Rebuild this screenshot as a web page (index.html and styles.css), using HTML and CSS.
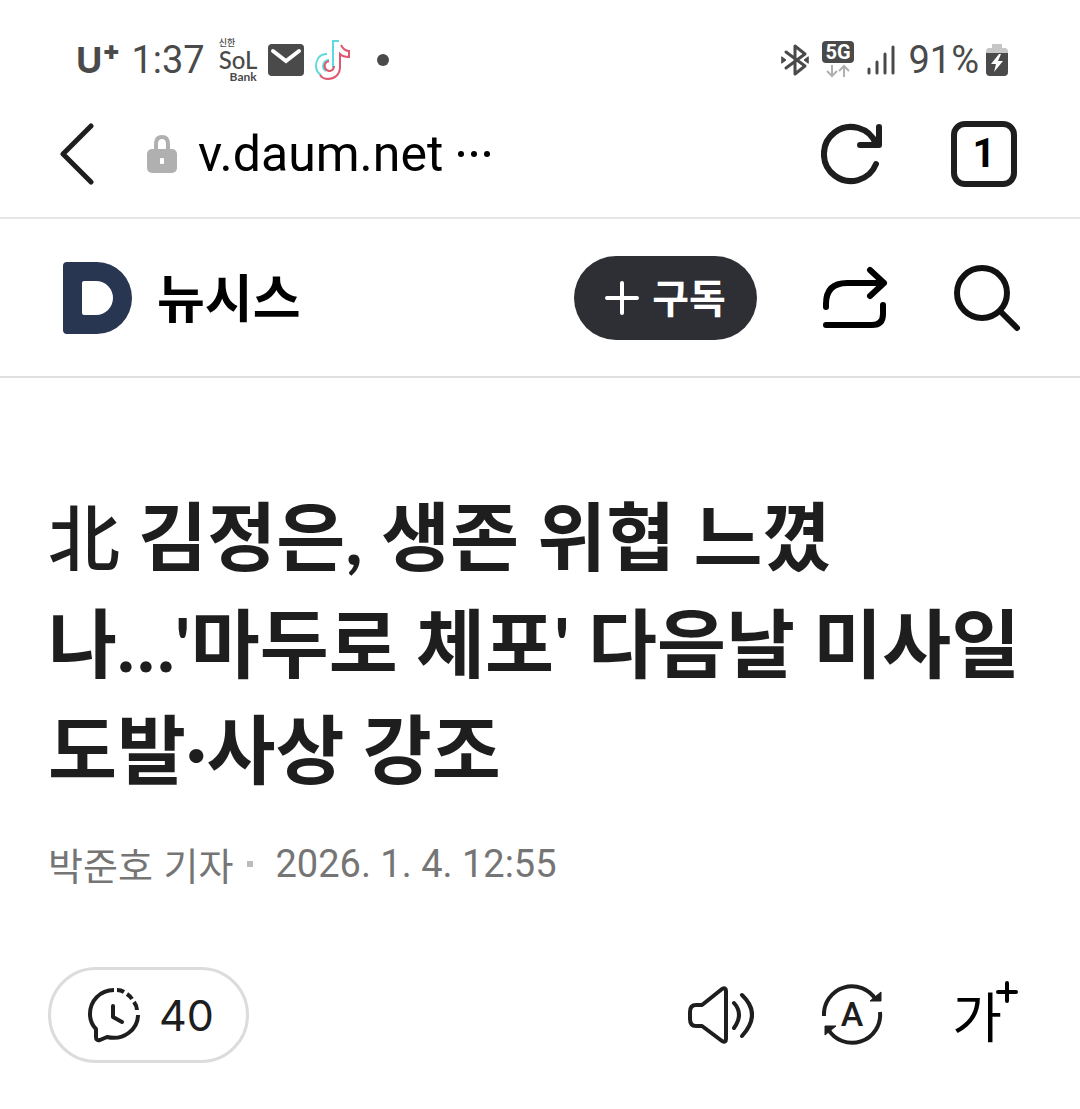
FILE: index.html
```html
<!DOCTYPE html>
<html lang="ko">
<head>
  <meta charset="UTF-8">
  <meta name="viewport" content="width=device-width, initial-scale=1">
  <title>뉴시스</title>
  <link rel="stylesheet" href="styles.css">
</head>
<body>
  <!-- phone status bar -->
  <div class="status">
    <div class="status-left">
      <span class="carrier">U<sup>+</sup></span>
      <span class="status-text clock">1:37</span>
      <span class="sol">
        <span class="sol-top">신한</span>
        <span class="sol-mid">SoL</span>
        <span class="sol-bottom">Bank</span>
      </span>
      <svg class="mail" width="36" height="32" viewBox="0 0 36 32">
        <rect width="36" height="32" rx="4" fill="#4a4a4a"/>
        <path d="M5 7l13 10L31 7" fill="none" stroke="#fff" stroke-width="4" stroke-linecap="round"/>
      </svg>
      <svg class="tiktok" width="36" height="42" viewBox="0 0 36 42" fill="none" stroke-width="2">
        <path d="M12 15C4 15 1 21 1 27c0 4 2 7 5 9M14 21c-4 0-6 3-6 6 0 2 1 4 3 5M18 29V2h6" stroke="#5fd9dc"/>
        <path d="M26 6c2 4 4 6 8 6v6c-4 0-7-1-9-3v13c0 8-6 12-12 12-3 0-6-1-8-4M14 22c-4 1-5 4-4 7 3 5 9 3 9-2" stroke="#e0566f"/>
      </svg>
      <span class="more-dot"></span>
    </div>
    <div class="status-right">
      <svg width="28" height="34" viewBox="0 0 28 34" fill="none" stroke="#4a4a4a" stroke-width="3" stroke-linejoin="round" stroke-linecap="round">
        <path d="M5 9l19 14-10 8V3l10 8L5 25"/>
        <path d="M1 14l4 3-4 3zM27 14l-4 3 4 3z" stroke-width="1" fill="#4a4a4a"/>
      </svg>
      <svg class="network" width="32" height="38" viewBox="0 0 32 38">
        <rect width="32" height="22" rx="4" fill="#4a4a4a"/>
        <text x="16" y="18" class="network-text">5G</text>
        <path d="M10 24v11M5 30l5 5 5-5M22 36V25M17 30l5-5 5 5" fill="none" stroke="#b0b0b0" stroke-width="2"/>
      </svg>
      <svg class="signal" width="28" height="30" viewBox="0 0 28 30" stroke="#4a4a4a" stroke-width="3" stroke-linecap="round">
        <path d="M2 24v4M10 17v11M18 9v19M26 2v26"/>
      </svg>
      <span class="status-text">91%</span>
      <svg class="battery" width="22" height="32" viewBox="0 0 22 32">
        <path d="M6 0h10v4h3q3 0 3 4v2H0V8q0-4 3-4h3z" fill="#c6c6c6"/>
        <path d="M0 9h22v19q0 4-4 4H4q-4 0-4-4z" fill="#4a4a4a"/>
        <path d="M13 10L5 20h5l-2 8 9-11h-5l3-7z" fill="#fff"/>
      </svg>
    </div>
  </div>

  <!-- browser address bar -->
  <nav class="toolbar">
    <button class="icon-btn back" aria-label="뒤로">
      <svg width="36" height="62" viewBox="0 0 36 62" fill="none" stroke="#1e1e1e" stroke-width="5" stroke-linecap="round" stroke-linejoin="round">
        <path d="M33 3L5 31l28 28"/>
      </svg>
    </button>
    <svg class="lock" width="30" height="38" viewBox="0 0 30 38">
      <path d="M9 16V9q0-7 6-7t6 7v7" fill="none" stroke="#b0b0b0" stroke-width="4"/>
      <rect y="14" width="30" height="24" rx="5" fill="#b0b0b0"/>
      <rect x="13" y="23" width="4" height="6" rx="1" fill="#fff"/>
    </svg>
    <span class="url">v.daum.net</span>
    <button class="icon-btn" aria-label="더보기">
      <svg width="32" height="6" viewBox="0 0 32 6"><circle cx="3" cy="3" r="3"/><circle cx="16" cy="3" r="3"/><circle cx="29" cy="3" r="3"/></svg>
    </button>
    <button class="icon-btn push" aria-label="새로고침">
      <svg width="62" height="62" viewBox="0 0 62 62" fill="none" stroke="#1e1e1e" stroke-width="6" stroke-linecap="round" stroke-linejoin="round">
        <path d="M55 41A27 27 0 1 1 55 21M58 4v18H39"/>
      </svg>
    </button>
    <button class="tabs" aria-label="탭">1</button>
  </nav>

  <header class="header">
    <a class="brand" href="#">
      <svg width="70" height="72" viewBox="0 0 70 72">
        <path d="M4 0h30a35 36 0 0 1 0 72H4q-4 0-4-4V4q0-4 4-4zM21 19q-2 0-2 2v30q0 2 2 2h12a17 17 0 0 0 0-34z" fill="#293651" fill-rule="evenodd"/>
      </svg>
      <span>뉴시스</span>
    </a>
    <button class="subscribe">
      <svg width="34" height="34" viewBox="0 0 34 34" stroke="#fff" stroke-width="4" stroke-linecap="round"><path d="M17 2v30M2 17h30"/></svg>
      <span>구독</span>
    </button>
    <button class="icon-btn" aria-label="공유">
      <svg width="66" height="64" viewBox="0 0 66 64" fill="none" stroke="#000" stroke-width="6" stroke-linecap="round" stroke-linejoin="round">
        <path d="M4 41v-3q0-21 21-21h37M48 4l14 13-14 13M61 39v9q0 11-11 11H4"/>
      </svg>
    </button>
    <button class="icon-btn" aria-label="검색">
      <svg width="68" height="68" viewBox="0 0 68 68" fill="none" stroke="#111" stroke-width="6" stroke-linecap="round">
        <circle cx="29" cy="29" r="25"/><path d="M47 47l17 17"/>
      </svg>
    </button>
  </header>

  <main class="article">
    <h1><span class="hanja">北</span> 김정은, 생존 위협 느꼈<br>나…'마두로 체포' 다음날 미사일<br>도발·사상 강조</h1>
    <p class="byline">박준호 기자<i class="sep"></i><time datetime="2026-01-04T12:55">2026. 1. 4. 12:55</time></p>

    <div class="actions">
      <button class="comments">
        <svg width="54" height="56" viewBox="0 0 54 56" fill="none" stroke="#1e1e1e" stroke-width="4" stroke-linejoin="round">
          <path d="M27 3C13 3 3 14 3 27c0 6 2 11 6 15v8q0 4 4 3l7-3c17 4 31-8 31-22"/>
          <path d="M30 3q4 0 7 2M40 7q3 2 5 5M47 15q3 4 3 8"/>
          <path d="M26 19v11l9 5" stroke-linecap="round"/>
        </svg>
        <span>40</span>
      </button>
      <button class="icon-btn push" aria-label="음성으로 듣기">
        <svg width="66" height="60" viewBox="0 0 66 60" fill="none" stroke="#1e1e1e" stroke-width="4" stroke-linecap="round" stroke-linejoin="round">
          <path d="M8 20h6L34 4q4-2 4 2v48q0 4-4 2L14 41H8q-6 0-6-7v-7q0-7 6-7z"/>
          <path d="M46 18q10 11 0 25M54 10q20 19 0 41"/>
        </svg>
      </button>
      <button class="icon-btn" aria-label="번역">
        <svg width="62" height="62" viewBox="0 0 62 62" fill="none" stroke="#1e1e1e" stroke-width="4">
          <path d="M2 32A28 28 0 0 1 54 16M58 28A28 28 0 0 1 6 45"/>
          <path d="M48 17h11V8zM14 42H3v9z" fill="#1e1e1e" stroke-width="1"/>
          <text x="30" y="42" class="translate-a">A</text>
        </svg>
      </button>
      <button class="font-size" aria-label="글자 크기">가<svg width="22" height="22" viewBox="0 0 22 22" stroke="#000" stroke-width="4" stroke-linecap="round"><path d="M11 2v18M2 11h18"/></svg></button>
    </div>
  </main>
</body>
</html>
```

FILE: styles.css
```css
* {
  box-sizing: border-box;
}

body {
  margin: 0;
  background-color: #fff;
  color: #1e1e1e;
  font-family: "Noto Sans CJK KR", sans-serif;
}

button {
  padding: 0;
  border: 0;
  background: none;
  color: inherit;
  font-family: inherit;
  cursor: pointer;
}

svg {
  display: block;
  flex: none;
}

.icon-btn {
  flex: none;
}

.push {
  margin-left: auto;
}

/* status bar */
.status {
  display: flex;
  justify-content: space-between;
  height: 90px;
  padding: 30px 72px 0 76px;
  color: #4a4a4a;
  font-family: Roboto, sans-serif;
}

.status-left,
.status-right {
  display: flex;
  align-items: center;
}

.status-left {
  gap: 11px;
}

.status-right {
  gap: 13px;
}

.carrier {
  font: 700 36px/60px Inter, sans-serif;
}

.carrier sup {
  font-size: 26px;
  font-weight: 900;
  line-height: 0;
}

.status-text {
  font-size: 38px;
  line-height: 60px;
}

.clock {
  margin-right: 3px;
}

.battery {
  margin-left: -6px;
}

.sol {
  display: flex;
  flex-direction: column;
  width: 38px;
}

.sol-top {
  font: 500 9px/12px "Noto Sans CJK KR", sans-serif;
}

.sol-mid {
  font: 500 24px/22px Lato, sans-serif;
}

.sol-bottom {
  align-self: flex-end;
  font: 700 12px/12px Lato, sans-serif;
}

.more-dot {
  width: 12px;
  height: 12px;
  margin-left: 15px;
  border-radius: 50%;
  background-color: #4a4a4a;
}

.network-text {
  fill: #fff;
  font: 700 20px Roboto, sans-serif;
  text-anchor: middle;
}

/* address bar */
.toolbar {
  display: flex;
  align-items: center;
  height: 129px;
  padding: 0 63px 0 58px;
  border-bottom: 2px solid #e6e6e6;
}

.lock {
  margin-left: 53px;
}

.url {
  margin: 0 15px 0 21px;
  color: #000;
  font: 400 50px/60px Roboto, sans-serif;
}

.tabs {
  width: 66px;
  height: 66px;
  margin-left: 68px;
  border: 6px solid #1e1e1e;
  border-radius: 14px;
  color: #000;
  font: 700 40px/52px Roboto, sans-serif;
}

/* site header */
.header {
  display: flex;
  align-items: center;
  gap: 65px;
  height: 159px;
  padding: 0 59px 0 63px;
  border-bottom: 2px solid #e0e0e0;
}

.brand {
  display: flex;
  align-items: center;
  gap: 24px;
  margin-right: auto;
  color: #000;
  font-size: 52px;
  font-weight: 700;
  line-height: 68px;
  text-decoration: none;
}

.brand span,
.subscribe span {
  padding-bottom: 4px;
}

.subscribe {
  display: flex;
  align-items: center;
  justify-content: center;
  gap: 13px;
  width: 183px;
  height: 84px;
  border-radius: 42px;
  background-color: #2e2f34;
  color: #fff;
  font-size: 40px;
  font-weight: 700;
}

/* article */
.article {
  padding: 105px 48px 48px;
}

h1 {
  margin: 0;
  font-family: Lato, "Noto Sans CJK KR", sans-serif;
  font-size: 75px;
  font-weight: 700;
  line-height: 106px;
}

.hanja {
  font-size: 72px;
  font-weight: 500;
}

.byline {
  display: flex;
  align-items: center;
  margin: 34px 0 0;
  color: #757575;
  font-size: 38px;
  line-height: 56px;
}

.byline time {
  font-family: Roboto, sans-serif;
}

.sep {
  width: 6px;
  height: 6px;
  margin: 0 22px 0 14px;
  background-color: #bdbdbd;
}

.actions {
  display: flex;
  align-items: center;
  gap: 68px;
  margin-top: 75px;
  padding-right: 14px;
}

.comments {
  display: flex;
  align-items: center;
  gap: 18px;
  width: 201px;
  height: 96px;
  padding-left: 36px;
  border: 3px solid #dcdcdc;
  border-radius: 48px;
  font-family: Inter, sans-serif;
  font-size: 43px;
}

.translate-a {
  fill: #1e1e1e;
  stroke: none;
  font: 500 34px Roboto, sans-serif;
  text-anchor: middle;
}

.font-size {
  display: flex;
  align-items: flex-start;
  color: #000;
  font-size: 54px;
  line-height: 60px;
}

.font-size svg {
  margin: -4px 0 0 -6px;
}
```
